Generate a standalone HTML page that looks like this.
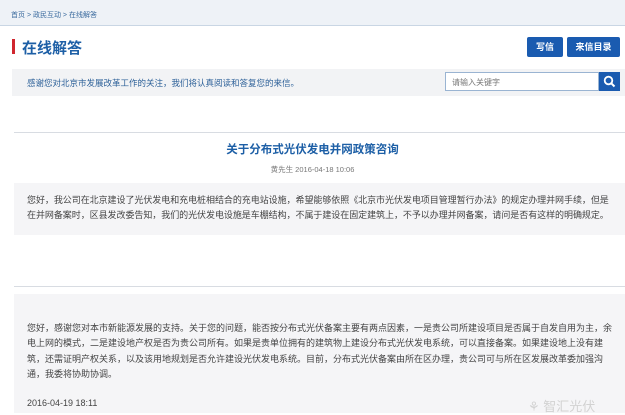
<!DOCTYPE html>
<html><head><meta charset="utf-8"><style>
*{margin:0;padding:0;box-sizing:border-box}
body{width:625px;height:413px;overflow:hidden;background:#fff;font-family:"Liberation Sans","Noto Sans CJK SC",sans-serif;position:relative;color:#444}
.a{position:absolute;white-space:nowrap}
</style></head><body>
<div class="a" style="left:0;top:0;width:625px;height:26px;background:#eef2f7;border-bottom:1px solid #c9d6e4"></div>
<div class="a" style="left:11px;top:10px;font-size:7px;color:#3a6a9e">首页 &gt; 政民互动 &gt; 在线解答</div>
<div class="a" style="left:12px;top:39px;width:3px;height:15px;background:#d0262e"></div>
<div class="a" style="left:22px;top:37px;font-size:15px;font-weight:bold;color:#1d5fa6">在线解答</div>
<div class="a" style="left:527px;top:37px;width:36px;height:20px;background:#1a5bb0;border-radius:2px;color:#fff;font-size:9px;font-weight:bold;text-align:center;line-height:20px">写信</div>
<div class="a" style="left:567px;top:37px;width:53px;height:20px;background:#1a5bb0;border-radius:2px;color:#fff;font-size:9px;font-weight:bold;text-align:center;line-height:20px">来信目录</div>
<div class="a" style="left:12px;top:69px;width:613px;height:27px;background:#f2f3f5"></div>
<div class="a" style="left:27px;top:77px;font-size:8.5px;color:#2b5f98">感谢您对北京市发展改革工作的关注，我们将认真阅读和答复您的来信。</div>
<div class="a" style="left:445px;top:72px;width:154px;height:19px;background:#fff;border:1px solid #9ab4d2"></div>
<div class="a" style="left:452px;top:77px;font-size:8px;color:#777">请输入关键字</div>
<div class="a" style="left:599px;top:72px;width:21px;height:19px;background:#1a5bb0"></div>
<svg class="a" style="left:603px;top:75px" width="13" height="13" viewBox="0 0 13 13"><circle cx="5.5" cy="5.5" r="3.8" fill="none" stroke="#fff" stroke-width="1.8"/><path d="M8.3 8.3L11.5 11.5" stroke="#fff" stroke-width="2"/></svg>
<div class="a" style="left:14px;top:132px;width:611px;height:1px;background:#d8dce2"></div>
<div class="a" style="left:0;top:141px;width:625px;text-align:center;font-size:11.5px;font-weight:bold;color:#1d5fa6">关于分布式光伏发电并网政策咨询</div>
<div class="a" style="left:0;top:164px;width:625px;text-align:center;font-size:7.5px;color:#777">黄先生 2016-04-18 10:06</div>
<div class="a" style="left:14px;top:183px;width:611px;height:52px;background:#f5f5f7"></div>
<div class="a" style="left:27px;top:193px;font-size:9px;line-height:15px;color:#444;letter-spacing:-0.05px">您好，我公司在北京建设了光伏发电和充电桩相结合的充电站设施，希望能够依照《北京市光伏发电项目管理暂行办法》的规定办理并网手续，但是<br>在并网备案时，区县发改委告知，我们的光伏发电设施是车棚结构，不属于建设在固定建筑上，不予以办理并网备案，请问是否有这样的明确规定。</div>
<div class="a" style="left:14px;top:286px;width:611px;height:1px;background:#d8dce2"></div>
<div class="a" style="left:14px;top:294px;width:611px;height:119px;background:#f5f5f7"></div>
<div class="a" style="left:27px;top:321px;font-size:9px;line-height:15.3px;color:#444">您好，感谢您对本市新能源发展的支持。关于您的问题，能否按分布式光伏备案主要有两点因素，一是贵公司所建设项目是否属于自发自用为主，余<br>电上网的模式，二是建设地产权是否为贵公司所有。如果是贵单位拥有的建筑物上建设分布式光伏发电系统，可以直接备案。如果建设地上没有建<br>筑，还需证明产权关系，以及该用地规划是否允许建设光伏发电系统。目前，分布式光伏备案由所在区办理，贵公司可与所在区发展改革委加强沟<br>通，我委将协助协调。</div>
<div class="a" style="left:27px;top:398px;font-size:9px;color:#444">2016-04-19 18:11</div>
<div class="a" style="left:528px;top:396px;font-size:13px;color:#d2d2d2">⚘ 智汇光伏</div>
</body></html>
